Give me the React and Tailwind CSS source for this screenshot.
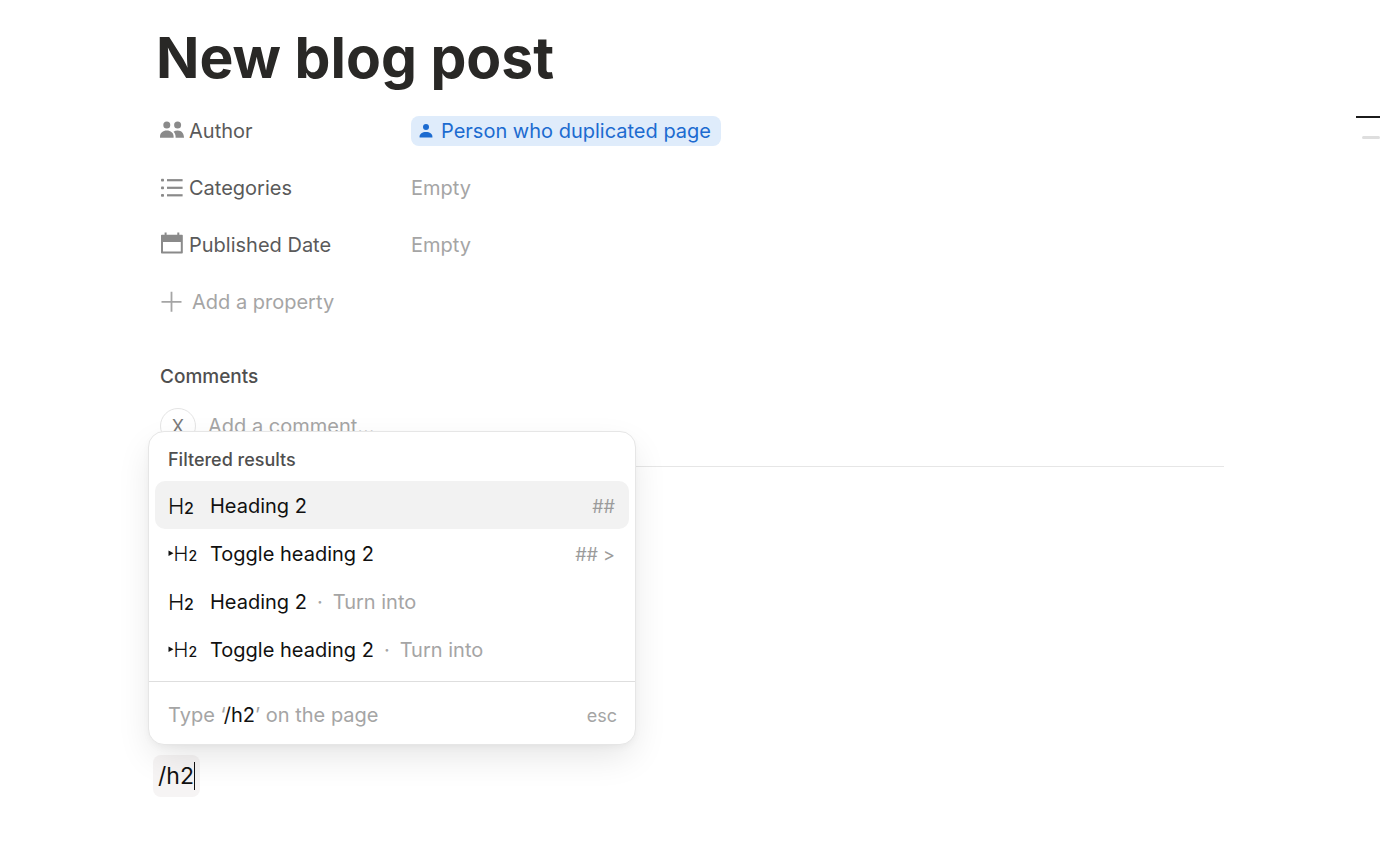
const PROPERTY_ROW = "flex h-[57px] items-center";
const PROPERTY_LABEL = "flex w-[251px] items-center gap-[5px] text-[#5a5a5a]";

function PeopleIcon() {
  return (
    <svg width="24" height="20" viewBox="0 0 24 20" fill="currentColor" aria-hidden="true">
      <circle cx="6.8" cy="4" r="3.5" />
      <circle cx="17.6" cy="4" r="3.5" />
      <path d="M0 16.800v-1.200C0 11.900 2.900 9.500 6.800 9.500s6.800 2.400 6.800 6.100v1.200z" />
      <path d="M15.600 16.800H24c0-4.500-2.500-7.300-6.300-7.300-1.700 0-3.100.4-4.200 1.200 1.400 1.300 2.100 3 2.100 5z" />
    </svg>
  );
}

function ListIcon() {
  return (
    <svg width="24" height="20" viewBox="0 0 24 20" fill="currentColor" aria-hidden="true">
      <rect x="1" y="0.800" width="3" height="2.800" rx="0.800" />
      <rect x="1" y="8.400" width="3" height="2.800" rx="0.800" />
      <rect x="1" y="15.900" width="3" height="2.800" rx="0.800" />
      <rect x="7" y="1.100" width="15.600" height="2.200" />
      <rect x="7" y="8.700" width="15.600" height="2.200" />
      <rect x="7" y="16.200" width="15.600" height="2.200" />
    </svg>
  );
}

function CalendarIcon() {
  return (
    <svg width="24" height="28" viewBox="0 0 24 28" fill="currentColor" aria-hidden="true">
      <path
        fillRule="evenodd"
        d="M4.600 1.500h2v2.300h10.700V1.500h2v2.300H22a.8.8 0 0 1 .8.8v17.200a.8.8 0 0 1-.8.8H1.800a.8.8 0 0 1-.8-.8V4.600a.8.8 0 0 1 .8-.8h2.800zM3 11v9.500h17.800V11z"
      />
    </svg>
  );
}

function PlusIcon() {
  return (
    <svg width="24" height="24" viewBox="0 0 24 24" stroke="currentColor" strokeWidth="1.800" aria-hidden="true">
      <path d="M11.500 1.800v20M1.500 11.800h20" />
    </svg>
  );
}

function PersonIcon() {
  return (
    <svg width="14" height="16" viewBox="0 0 14 16" fill="currentColor" aria-hidden="true">
      <circle cx="7" cy="4" r="3" />
      <path d="M.6 14.400v-.8C.6 10.800 3.200 9 7 9s6.400 1.800 6.400 4.600v.8z" />
    </svg>
  );
}

function HeadingIcon({ toggle }) {
  return (
    <svg
      className="shrink-0 overflow-visible font-['Inter',sans-serif]"
      width="30"
      height="24"
      viewBox="0 0 30 24"
      fill="currentColor"
      aria-hidden="true"
    >
      {toggle ? (
        <>
          <path d="M.5 8.500v5.600L5.500 11.300z" />
          <text x="5.500" y="18.500" fontSize="20" fontWeight="300">H</text>
          <text x="20.500" y="18.500" fontSize="14" fontWeight="500">2</text>
        </>
      ) : (
        <>
          <text x="0" y="19.500" fontSize="22" fontWeight="300">H</text>
          <text x="16" y="19.500" fontSize="16" fontWeight="500">2</text>
        </>
      )}
    </svg>
  );
}

const commands = [
  { label: "Heading 2", hint: "##", active: true },
  { label: "Toggle heading 2", hint: "## >", toggle: true },
  { label: "Heading 2", note: "Turn into" },
  { label: "Toggle heading 2", note: "Turn into", toggle: true },
];

function SlashMenu() {
  return (
    <div className="absolute bottom-full -left-3 mb-[10px] w-[488px] max-w-full overflow-hidden rounded-2xl border border-[#e6e6e6] bg-white shadow-[0_14px_36px_-4px_rgba(0,0,0,0.11),0_3px_8px_-2px_rgba(0,0,0,0.05)]">
      <h3 className="px-[19px] pt-[15px] pb-2 text-[18px] leading-[26px] font-medium text-[#4f4f4f]">
        Filtered results
      </h3>
      <ul className="px-[6px] pb-2">
        {commands.map((item, i) => (
          <li key={i}>
            <button
              type="button"
              className={`flex h-12 w-full items-center rounded-[10px] pt-[2px] pr-[14px] pl-[13px] text-left text-[20px] text-[#111111] ${
                item.active ? "bg-[#f2f2f2]" : ""
              }`}
            >
              <HeadingIcon toggle={item.toggle} />
              <span className="ml-3">{item.label}</span>
              {item.note && (
                <span className="text-[#a5a5a5]">
                  <span className="mx-[10px]">·</span>
                  {item.note}
                </span>
              )}
              {item.hint && <span className="ml-auto text-[18px] text-[#9b9b9b]">{item.hint}</span>}
            </button>
          </li>
        ))}
      </ul>
      <button
        type="button"
        className="flex h-[63px] w-full items-center justify-between border-t border-[#dedede] pt-1 pr-[18px] pl-[19px] text-[20px] text-[#a5a5a5]"
      >
        <span>
          Type ‘<span className="text-[#111111]">/h2</span>’ on the page
        </span>
        <span className="text-[18px]">esc</span>
      </button>
    </div>
  );
}

export default function App() {
  return (
    <div className="flex min-h-screen items-start bg-white font-['Inter',sans-serif] text-[#4f4f4f]">
      <main className="mx-auto w-full max-w-[1064px] pt-5">
        <h1 id="top" className="-ml-1 text-[57px] leading-[75px] font-bold text-[#292826]">
          New blog post
        </h1>

        <dl className="mt-[7px] text-[20px]">
          <div className={PROPERTY_ROW}>
            <dt className={PROPERTY_LABEL}>
              <span className="text-[#8a8a8a]"><PeopleIcon /></span>
              Author
            </dt>
            <dd>
              <span className="flex h-[30px] items-center gap-2 rounded-lg bg-[#dfecfb] pr-[10px] pl-2 text-[#1c6bd0]">
                <PersonIcon />
                Person who duplicated page
              </span>
            </dd>
          </div>
          <div className={PROPERTY_ROW}>
            <dt className={PROPERTY_LABEL}>
              <span className="text-[#8a8a8a]"><ListIcon /></span>
              Categories
            </dt>
            <dd className="text-[#a5a5a5]">Empty</dd>
          </div>
          <div className={PROPERTY_ROW}>
            <dt className={PROPERTY_LABEL}>
              <span className="text-[#8a8a8a]"><CalendarIcon /></span>
              Published Date
            </dt>
            <dd className="text-[#a5a5a5]">Empty</dd>
          </div>
        </dl>
        <button type="button" className="flex h-[57px] items-center gap-2 text-[20px] text-[#a5a5a5]">
          <PlusIcon />
          Add a property
        </button>

        <section className="border-b border-[#e6e6e6]">
          <h2 className="mt-[34px] text-[19px] leading-[26px] font-medium">Comments</h2>
          <div className="mt-[18px] mb-[22px] flex items-center gap-3">
            <span className="flex size-9 items-center justify-center rounded-full border border-[#e4e4e4] text-[18px] text-[#7a7a7a]">
              X
            </span>
            <input
              type="text"
              aria-label="Add a comment"
              placeholder="Add a comment…"
              className="h-9 flex-1 text-[20px] outline-none placeholder:text-[#a5a5a5]"
            />
          </div>
        </section>

        <div id="body" className="relative mt-[288px]">
          <SlashMenu />
          <div className="-ml-[7px] inline-flex h-[42px] items-center rounded-lg bg-[#f6f4f4] pr-[5px] pl-[5px]">
            <input
              type="text"
              aria-label="Block text"
              defaultValue="/h2"
              className="field-sizing-content text-[23px] text-[#111111] outline-none"
            />
            <span className="h-7 w-px bg-[#111111]" />
          </div>
        </div>
      </main>

      <nav aria-label="Page outline" className="absolute top-[116px] right-1 flex flex-col items-end gap-[18px]">
        <a href="#top" aria-label="New blog post" className="h-[2px] w-6 bg-[#1b1b1b]" />
        <a href="#body" aria-label="Section" className="h-[3px] w-[18px] rounded-full bg-[#dedede]" />
      </nav>
    </div>
  );
}
